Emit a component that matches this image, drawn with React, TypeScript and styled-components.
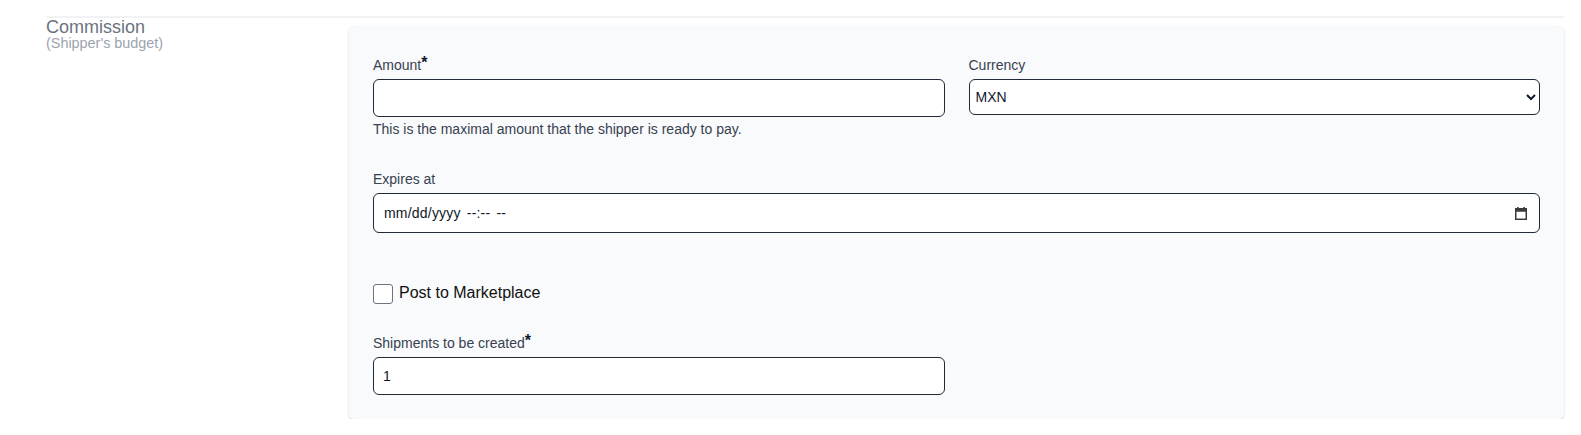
import React from "react";
import styled, { createGlobalStyle } from "styled-components";

const GlobalStyle = createGlobalStyle`
  html, body {
    margin: 0;
    padding: 0;
    background: #ffffff;
    font-family: "Liberation Sans", Arial, sans-serif;
  }
  * { box-sizing: border-box; }
`;

const Page = styled.div`
  padding: 16px 17px 0 46px;
`;

const Section = styled.section`
  border-top: 2px solid #f1f2f4;
  display: grid;
  grid-template-columns: 303px 1fr;
  align-items: start;
`;

const Heading = styled.div`
  padding-top: 0;
`;

const Title = styled.h3`
  margin: 0;
  font-size: 18px;
  line-height: 18px;
  font-weight: 400;
  color: #6b7280;
`;

const Subtitle = styled.p`
  margin: 0;
  font-size: 14.4px;
  line-height: 14.4px;
  color: #9ca3af;
`;

const Card = styled.div`
  margin-top: 8px;
  background: #f9fafb;
  border-radius: 5px;
  box-shadow: 0 1px 3px rgba(0, 0, 0, 0.12), 0 1px 2px rgba(0, 0, 0, 0.06);
  padding: 29px 24px 24px 24px;
  display: flex;
  flex-direction: column;
`;

const Row = styled.div<{ $mt?: number }>`
  display: grid;
  grid-template-columns: 1fr 1fr;
  column-gap: 24px;
  margin-top: ${(p) => p.$mt ?? 0}px;
`;

const Field = styled.div<{ $mt?: number }>`
  display: flex;
  flex-direction: column;
  margin-top: ${(p) => p.$mt ?? 0}px;
`;

const Label = styled.label`
  font-size: 14px;
  line-height: 20px;
  color: #374151;
  margin-bottom: 4px;
`;

const Req = styled.span`
  color: #111827;
  font-size: 16px;
  font-weight: 700;
  line-height: 1;
  vertical-align: top;
`;

const TextInput = styled.input`
  height: 38px;
  width: 100%;
  border: 1px solid #1f2937;
  border-radius: 6px;
  background: #ffffff;
  padding: 0 9px;
  font-family: "Liberation Sans", Arial, sans-serif;
  font-size: 14px;
  color: #111827;
  outline: none;
`;

const DateBox = styled.label`
  height: 40px;
  width: 100%;
  border: 1px solid #1f2937;
  border-radius: 6px;
  background: #ffffff;
  display: flex;
  align-items: center;
  padding: 0 12px 0 10px;
`;

const DateText = styled.input`
  flex: 1;
  border: none;
  outline: none;
  background: transparent;
  padding: 0;
  font-family: "Liberation Sans", Arial, sans-serif;
  font-size: 14px;
  letter-spacing: 0.2px;
  word-spacing: 2px;
  color: #111827;
  &::placeholder {
    color: #111827;
    opacity: 1;
  }
`;

const Select = styled.select`
  height: 36px;
  width: 100%;
  border: 1px solid #1f2937;
  border-radius: 6px;
  background: #ffffff;
  padding: 0 2px;
  font-family: "Liberation Sans", Arial, sans-serif;
  font-size: 14px;
  color: #111827;
  outline: none;
`;

const Help = styled.p`
  margin: 2px 0 0 0;
  font-size: 14px;
  line-height: 20px;
  color: #374151;
`;

const CheckRow = styled.label<{ $mt?: number }>`
  display: flex;
  align-items: center;
  gap: 6px;
  height: 20px;
  margin-top: ${(p) => p.$mt ?? 0}px;
  font-size: 16px;
  color: #111111;
`;

const Check = styled.input`
  appearance: none;
  -webkit-appearance: none;
  width: 20px;
  height: 20px;
  margin: 0;
  border: 1px solid #6b7280;
  border-radius: 3px;
  background: #ffffff;
  flex: none;
`;

const CheckText = styled.span`
  position: relative;
  top: -1px;
`;

const Half = styled.div`
  width: calc(50% - 12px);
`;

const CalendarIcon = () => (
  <svg width="12" height="13" viewBox="0 0 12 13" aria-hidden="true">
    <rect x="2" y="0" width="1.6" height="2" fill="#3a3a3a" />
    <rect x="8.4" y="0" width="1.6" height="2" fill="#3a3a3a" />
    <rect x="0.75" y="1.75" width="10.5" height="10.5" fill="none" stroke="#3a3a3a" strokeWidth="1.5" />
    <rect x="0.75" y="1.75" width="10.5" height="3" fill="#3a3a3a" />
  </svg>
);

export default function App() {
  return (
    <>
      <GlobalStyle />
      <Page>
        <Section>
          <Heading>
            <Title>Commission</Title>
            <Subtitle>(Shipper's budget)</Subtitle>
          </Heading>
          <Card>
            <Row>
              <Field>
                <Label htmlFor="amount">
                  Amount<Req>*</Req>
                </Label>
                <TextInput id="amount" type="text" />
                <Help>This is the maximal amount that the shipper is ready to pay.</Help>
              </Field>
              <Field>
                <Label htmlFor="currency">Currency</Label>
                <Select id="currency" defaultValue="MXN">
                  <option value="MXN">MXN</option>
                  <option value="USD">USD</option>
                  <option value="EUR">EUR</option>
                </Select>
              </Field>
            </Row>
            <Field $mt={30}>
              <Label htmlFor="expires">Expires at</Label>
              <DateBox>
                <DateText id="expires" type="text" placeholder="mm/dd/yyyy --:-- --" />
                <CalendarIcon />
              </DateBox>
            </Field>
            <CheckRow $mt={51}>
              <Check type="checkbox" />
              <CheckText>Post to Marketplace</CheckText>
            </CheckRow>
            <Half>
              <Field $mt={29}>
                <Label htmlFor="shipments">
                  Shipments to be created<Req>*</Req>
                </Label>
                <TextInput id="shipments" type="text" defaultValue="1" />
              </Field>
            </Half>
          </Card>
        </Section>
      </Page>
    </>
  );
}
